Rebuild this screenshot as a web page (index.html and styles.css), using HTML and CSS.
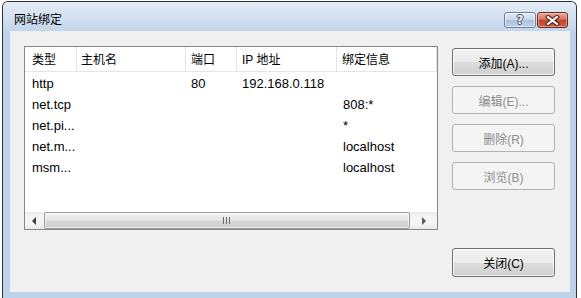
FILE: index.html
```html
<!DOCTYPE html>
<html lang="zh-CN">
<head>
<meta charset="utf-8">
<title>网站绑定</title>
<link rel="stylesheet" href="styles.css">
</head>
<body>
<div class="window">
  <div class="titlebar">
    <span class="title">网站绑定</span>
    <div class="caption-btns">
      <div class="cbtn help"><span>?</span></div>
      <div class="cbtn close">
        <svg width="15" height="11" viewBox="0 0 15 11">
          <path d="M3 2 L12 9 M12 2 L3 9" stroke="#4a1e16" stroke-width="4.2" stroke-linecap="square" fill="none"/>
          <path d="M3 2 L12 9 M12 2 L3 9" stroke="#ffffff" stroke-width="2.2" stroke-linecap="square" fill="none"/>
        </svg>
      </div>
    </div>
  </div>
  <div class="frame">
    <div class="client">
      <div class="main">
        <div class="listview">
          <div class="lv-header">
            <div class="hcell c1">类型</div>
            <div class="hcell c2">主机名</div>
            <div class="hcell c3">端口</div>
            <div class="hcell c4">IP 地址</div>
            <div class="hcell c5">绑定信息</div>
          </div>
          <div class="lv-rows">
            <div class="row"><div class="cell c1">http</div><div class="cell c2"></div><div class="cell c3">80</div><div class="cell c4">192.168.0.118</div><div class="cell c5"></div></div>
            <div class="row"><div class="cell c1">net.tcp</div><div class="cell c2"></div><div class="cell c3"></div><div class="cell c4"></div><div class="cell c5">808:*</div></div>
            <div class="row"><div class="cell c1">net.pi...</div><div class="cell c2"></div><div class="cell c3"></div><div class="cell c4"></div><div class="cell c5">*</div></div>
            <div class="row"><div class="cell c1">net.m...</div><div class="cell c2"></div><div class="cell c3"></div><div class="cell c4"></div><div class="cell c5">localhost</div></div>
            <div class="row"><div class="cell c1">msm...</div><div class="cell c2"></div><div class="cell c3"></div><div class="cell c4"></div><div class="cell c5">localhost</div></div>
          </div>
          <div class="hscroll">
            <div class="arrow left">
              <svg width="5" height="8" viewBox="0 0 5 8"><path d="M4 0 L0 4 L4 8 Z" fill="#3c3c3c"/></svg>
            </div>
            <div class="thumb">
              <svg width="8" height="7" viewBox="0 0 8 7"><path d="M0.5 0 V7 M3.5 0 V7 M6.5 0 V7" stroke="#6a6a6a" stroke-width="1"/></svg>
            </div>
            <div class="arrow right">
              <svg width="5" height="8" viewBox="0 0 5 8"><path d="M1 0 L5 4 L1 8 Z" fill="#5a5a5a"/></svg>
            </div>
          </div>
        </div>
        <div class="side-buttons">
          <div class="btn">添加(A)...</div>
          <div class="btn disabled">编辑(E)...</div>
          <div class="btn disabled">删除(R)</div>
          <div class="btn disabled">浏览(B)</div>
        </div>
      </div>
      <div class="footer">
        <div class="btn close-btn">关闭(C)</div>
      </div>
    </div>
  </div>
</div>
</body>
</html>
```

FILE: styles.css
```css
html, body {
  margin: 0;
  padding: 0;
  background: #ffffff;
}

body {
  font-family: "Liberation Sans", "Noto Sans CJK SC", sans-serif;
  font-size: 12px;
  color: #000;
}

.window {
  box-sizing: border-box;
  margin: 1px 0 0 2px;
  width: 575px;
  height: 297px;
  border: 1px solid #2b3138;
  border-bottom: none;
  border-radius: 6px 6px 0 0;
  overflow: hidden;
  background: #bdd3ea;
  display: flex;
  flex-direction: column;
}

.titlebar {
  height: 29px;
  box-sizing: border-box;
  padding: 8px 8px 0 11px;
  display: flex;
  justify-content: space-between;
  align-items: flex-start;
  background: linear-gradient(#e4ecf6 0%, #d5e2f1 45%, #c3d6ec 100%);
}

.title {
  font-family: "Noto Sans CJK SC", sans-serif;
  font-size: 12px;
  line-height: 18px;
  color: #000;
}

.caption-btns {
  display: flex;
  gap: 1px;
  margin-top: 2px;
}

.cbtn {
  box-sizing: border-box;
  height: 16px;
  border-radius: 3px;
  display: flex;
  align-items: center;
  justify-content: center;
}

.cbtn.help {
  width: 32px;
  border: 1px solid #6f8199;
  background: linear-gradient(#e2eaf4 0%, #c9d8ea 50%, #adc3dd 51%, #bcd0e8 100%);
  box-shadow: inset 0 0 0 1px rgba(255,255,255,0.55);
}

.cbtn.help span {
  font-family: "DejaVu Sans", sans-serif;
  font-weight: bold;
  font-size: 12px;
  line-height: 14px;
  color: #f4f6f9;
  text-shadow: 1px 0 0 #3d4a5c, -1px 0 0 #3d4a5c, 0 1px 0 #3d4a5c, 0 -1px 0 #3d4a5c;
}

.cbtn.close {
  width: 31px;
  border: 1px solid #6b2a20;
  background: linear-gradient(#e9a99b 0%, #d6725f 45%, #c2432d 52%, #d0614a 100%);
  box-shadow: inset 0 0 0 1px rgba(255,220,210,0.45);
}

.frame {
  flex: 1;
  padding: 0 6px 6px 7px;
  display: flex;
}

.client {
  width: 560px;
  height: 261px;
  box-sizing: border-box;
  background: #f0f0f0;
  padding: 15px 15px 0 14px;
  display: flex;
  flex-direction: column;
}

.main {
  display: flex;
  gap: 14px;
}

.listview {
  box-sizing: border-box;
  width: 414px;
  height: 184px;
  border: 1px solid #828790;
  background: #fff;
  display: flex;
  flex-direction: column;
}

.lv-header,
.row {
  display: grid;
  grid-template-columns: 52px 109px 51px 100px 100px;
}

.lv-header {
  height: 25px;
  box-sizing: border-box;
  border-bottom: 1px solid #e3e5e8;
}

.hcell {
  box-sizing: border-box;
  border-right: 1px solid #e3e5e8;
  padding: 4px 0 0 5px;
  line-height: 18px;
  white-space: nowrap;
  font-family: "Liberation Sans", "Noto Sans CJK SC", sans-serif;
  font-size: 12px;
}

.hcell.c1, .cell.c1 { padding-left: 7px; }
.hcell.c2 { padding-left: 4px; }

.lv-rows {
  flex: 1;
  padding-top: 1px;
}

.row {
  height: 21px;
}

.cell {
  box-sizing: border-box;
  padding-left: 5px;
  line-height: 21px;
  font-size: 13px;
  white-space: nowrap;
  overflow: hidden;
}

.cell.c5 { padding-left: 6px; }

.hscroll {
  height: 17px;
  display: flex;
  align-items: stretch;
  background: linear-gradient(#ebebeb 0%, #f6f6f6 30%, #f4f4f4 70%, #e9e9e9 100%);
}

.arrow {
  display: flex;
  align-items: center;
  justify-content: center;
}

.arrow.left { width: 18px; }
.arrow.right { width: 26px; }

.thumb {
  box-sizing: border-box;
  margin-left: 1px;
  width: 366px;
  border: 1px solid #9a9a9a;
  border-radius: 2px;
  background: linear-gradient(#f3f3f3 0%, #e6e6e6 45%, #d6d6d6 55%, #cdcdcd 100%);
  box-shadow: inset 0 0 0 1px rgba(255,255,255,0.6);
  display: flex;
  align-items: center;
  justify-content: center;
}

.side-buttons {
  width: 103px;
  padding-top: 2px;
  display: flex;
  flex-direction: column;
  gap: 10px;
}

.btn {
  box-sizing: border-box;
  height: 28px;
  border: 1px solid #707070;
  border-radius: 3px;
  background: linear-gradient(#f2f2f2 0%, #ebebeb 50%, #dddddd 51%, #cfcfcf 100%);
  box-shadow: inset 0 0 0 1px rgba(255,255,255,0.75);
  display: flex;
  align-items: center;
  justify-content: center;
  font-size: 12px;
  color: #000;
  white-space: nowrap;
}

.btn.disabled {
  border-color: #adb2b5;
  background: #f4f4f4;
  box-shadow: none;
  color: #8d8d8d;
}

.footer {
  margin-top: 18px;
  display: flex;
  justify-content: flex-end;
}

.close-btn {
  width: 103px;
  height: 29px;
}
```
